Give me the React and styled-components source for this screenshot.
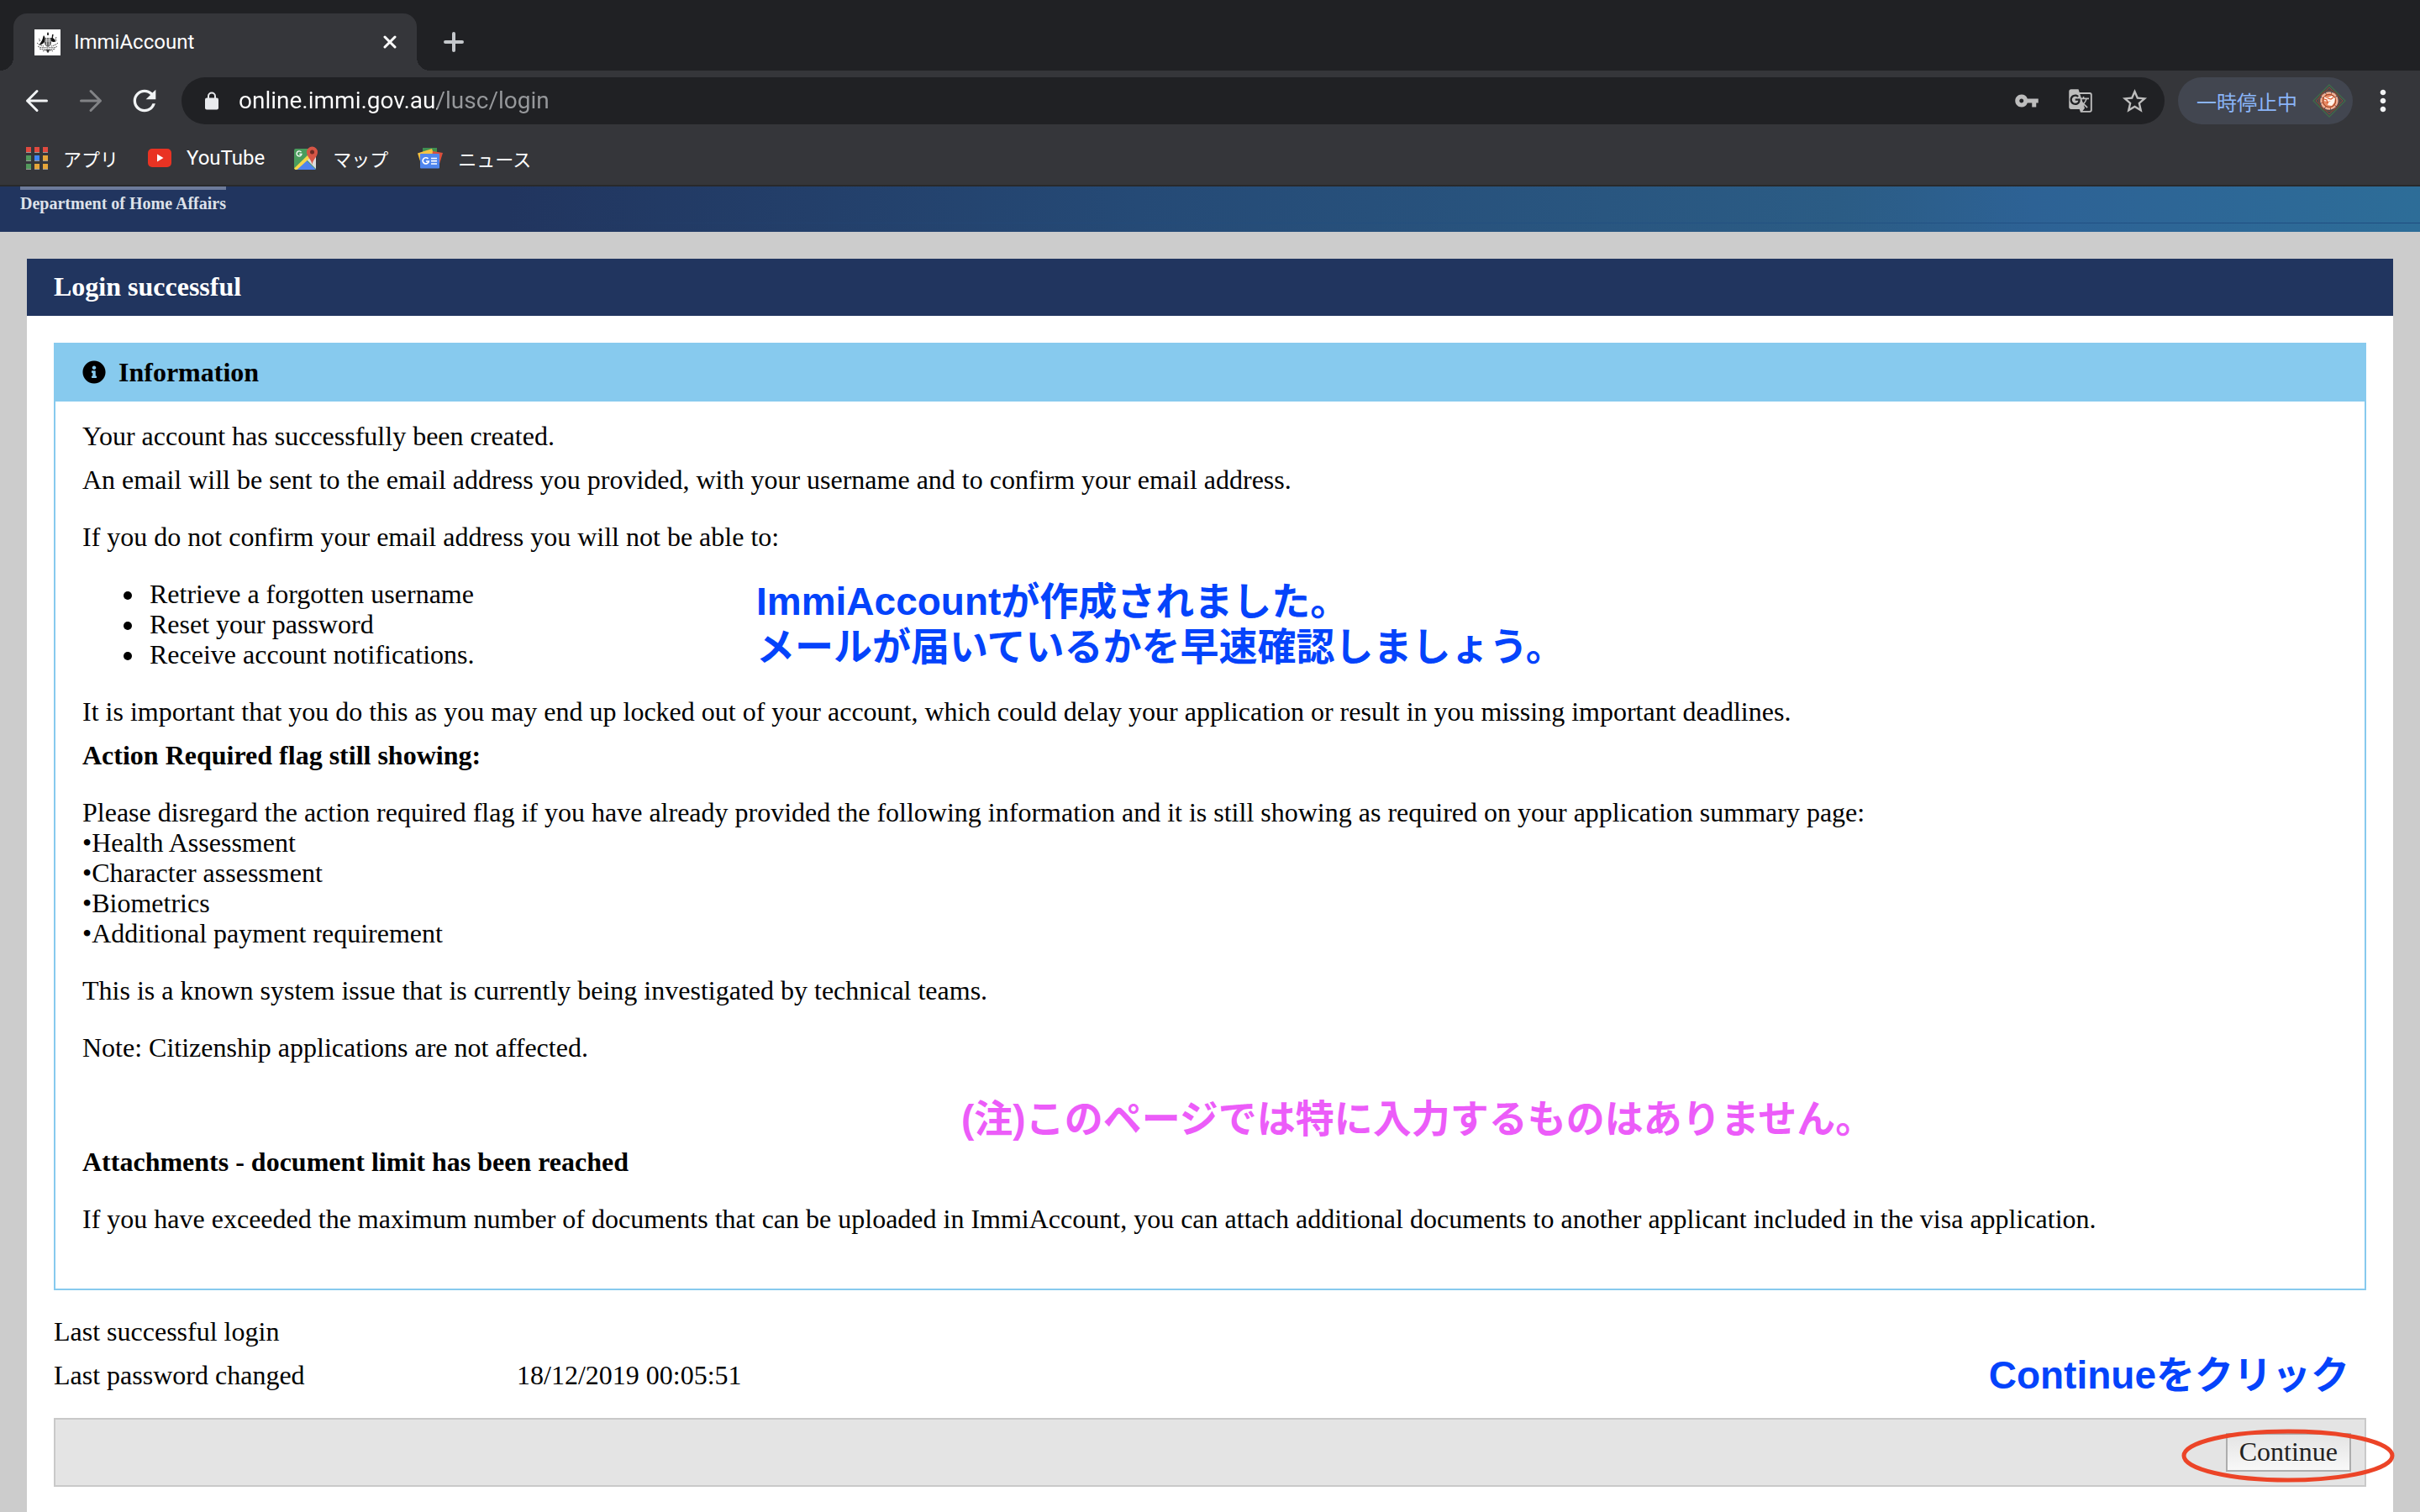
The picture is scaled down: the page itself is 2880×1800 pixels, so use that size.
import React from 'react'
import styled, { createGlobalStyle } from 'styled-components'
import { MdGTranslate, MdMoreVert, MdRefresh, MdStarBorder, MdVpnKey } from 'react-icons/md'
import { FaInfoCircle } from 'react-icons/fa'

const BaseStyles = createGlobalStyle`
  *,
  *::before,
  *::after {
    box-sizing: border-box;
  }

  :root {
    --c-strip: #202124;
    --c-toolbar: #35363a;
    --c-navy: #21355f;
    --c-info: #87caee;
    --c-note: #0443fb;
    --f-ui: Roboto, 'Noto Sans CJK JP', sans-serif;
    --f-page: 'Liberation Serif', serif;
    --f-note: 'Liberation Sans', 'Noto Sans CJK JP', sans-serif;
  }

  body {
    margin: 0;
    background: #ccc;
  }

  button {
    padding: 0;
    border: 0;
    background: none;
    color: inherit;
    font: inherit;
    cursor: pointer;
  }

  svg {
    display: block;
    flex: none;
  }
`

const Window = styled.div`
  display: flex;
  flex-direction: column;
  min-height: 100vh;
`

const TabStrip = styled.div`
  display: flex;
  height: 84px;
  padding: 16px 16px 0;
  gap: 24px;
  background: var(--c-strip);
`

const Tab = styled.div`
  position: relative;
  display: flex;
  align-items: center;
  width: 480px;
  padding: 0 22px 0 25px;
  gap: 16px;
  border-radius: 16px 16px 0 0;
  background: var(--c-toolbar);
  color: #fff;
  font-family: var(--f-ui);
  font-size: 24px;

  &::before,
  &::after {
    content: '';
    position: absolute;
    bottom: 0;
    width: 16px;
    height: 16px;
  }

  &::before {
    right: 100%;
    background: radial-gradient(circle at 0 0, transparent 16px, var(--c-toolbar) 16px);
  }

  &::after {
    left: 100%;
    background: radial-gradient(circle at 100% 0, transparent 16px, var(--c-toolbar) 16px);
  }
`

const TabTitle = styled.span`
  flex: 1;
`

const IconButton = styled.button`
  display: flex;
  align-items: center;
  justify-content: center;
  width: ${props => props.$size || 40}px;
  color: ${props => props.$color || '#f1f3f4'};
`

const Toolbar = styled.div`
  display: flex;
  align-items: center;
  height: 72px;
  padding: 0 32px 0 24px;
  gap: 24px;
  background: var(--c-toolbar);
`

const Omnibox = styled.div`
  display: flex;
  flex: 1;
  align-items: center;
  height: 56px;
  margin-right: -8px;
  padding: 0 16px 0 28px;
  gap: 24px;
  border-radius: 28px;
  background: var(--c-strip);
`

// the path after the host is dimmed
const Address = styled.input`
  flex: 1;
  min-width: 0;
  padding: 0;
  border: 0;
  outline: 0;
  background: linear-gradient(90deg, #fff 236px, #97999c 236px);
  background-clip: text;
  color: transparent;
  font-family: var(--f-ui);
  font-size: 28px;
  line-height: 40px;
`

const ProfileButton = styled.button`
  display: flex;
  align-items: center;
  height: 56px;
  padding: 0 8px 0 22px;
  gap: 18px;
  border-radius: 28px;
  background: #424650;
  color: #8ab4f8;
  font-family: var(--f-ui);
  font-size: 24px;
`

const Bookmarks = styled.nav`
  display: flex;
  align-items: center;
  height: 74px;
  padding: 0 31px;
  gap: 35px;
  border-bottom: 2px solid #28292b;
  background: var(--c-toolbar);
  height: 66px;
`

const Bookmark = styled.a`
  display: flex;
  align-items: center;
  gap: 18px;
  color: #fff;
  font-family: var(--f-ui);
  font-size: ${props => (props.$latin ? 24 : 22)}px;
  text-decoration: none;
`

const SiteHeader = styled.header`
  height: 54px;
  padding: 0 24px;
  background:
    linear-gradient(90deg, transparent 20%, #1f4c80) 0 43px / 100% 1px no-repeat,
    linear-gradient(90deg, var(--c-navy) 21%, #254a76 47%, #2b5c85 76%, #2d6295 84%, #2d6d98);
`

const Department = styled.div`
  width: max-content;
  padding-top: 6px;
  border-top: 4px solid #6d7b9b;
  color: #dde1e9;
  font-family: var(--f-page);
  font-size: 20px;
  font-weight: bold;
  line-height: 20px;
`

const Page = styled.main`
  display: flex;
  flex: 1;
  flex-direction: column;
  padding: 32px 32px 0;
  background: #ccc;
  color: #000;
  font-family: var(--f-page);
  font-size: 32px;
  line-height: 36px;
`

const PageTitle = styled.h1`
  margin: 0;
  padding: 15px 32px 17px;
  background: var(--c-navy);
  color: #fff;
  font-size: 32px;
  line-height: 36px;
`

const Panel = styled.div`
  flex: 1;
  padding: 32px 32px 30px;
  background: #fff;
`

const InfoBox = styled.section`
  position: relative;
  border: 2px solid var(--c-info);
`

const InfoTitle = styled.h2`
  display: flex;
  align-items: center;
  margin: 0;
  padding: 15px 32px 17px;
  gap: 15px;
  background: var(--c-info);
  font-size: 32px;
  line-height: 36px;
`

const InfoBody = styled.div`
  padding: 23px 32px 65px;
`

const Paragraph = styled.p`
  margin: 0 0 ${props => (props.$tight ? 16 : 32)}px;
  font-weight: ${props => (props.$strong ? 'bold' : 'normal')};

  &:last-child {
    margin-bottom: 0;
  }
`

const BulletList = styled.ul`
  margin: 0 0 32px;
  padding-left: 75px;

  li {
    padding-left: 5px;
  }
`

const Details = styled.dl`
  display: grid;
  grid-template-columns: 551px 1fr;
  margin: 31px 0 33px;
  row-gap: 16px;
`

const DetailValue = styled.dd`
  margin: 0;
`

const Actions = styled.div`
  position: relative;
  display: flex;
  justify-content: flex-end;
  padding: 16px;
  border: 2px solid #c9c9c9;
  background: #e4e4e4;
`

const ContinueButton = styled.button`
  height: 46px;
  padding: 0 14px 2px;
  border: 2px solid #adadad;
  background: linear-gradient(#e4e4e4, #f8f8f8);
  color: #222;
`

// notes that float over the page
const Note = styled.p`
  position: absolute;
  top: ${props => props.$top}px;
  left: ${props => props.$left};
  right: ${props => props.$right};
  margin: 0;
  color: ${props => props.$color || 'var(--c-note)'};
  font-family: var(--f-note);
  font-size: 46px;
  font-weight: bold;
  line-height: 54px;
  white-space: nowrap;
`

const Ring = styled.svg`
  position: absolute;
  top: 10px;
  right: -36px;
  pointer-events: none;
`

const CrestIcon = () => (
  <svg width="31" height="31" viewBox="0 0 31 31">
    <path fill="#fff" d="M0 0h31v31H0z" />
    <path fill="#111" d="M16 3l1 2-.3 2h-1.4L15 5zM6 18c1-2 2-3 3-5s1-4 2-6l1 1.500c1 2 1 4 .5 6L10 17l-3 1.500zM19 10.500c2-1 4 0 5 1.500l1.500 2.500-3 .5-3-1zM21 6.500l1-1 .6 1-.8 4-1.300.5z" />
    <path fill="#666" d="M12 10h8v6c0 3-2 4-4 5-2-1-4-2-4-5z" />
    <path fill="none" stroke="#ddd" strokeWidth=".8" d="M12 14h8M14.500 10v9M17.500 10v9M13 12h6" />
    <path fill="none" stroke="#555" strokeWidth="1" strokeDasharray="2 .7" d="M3 16c2 2 4 3 8 4M28 16c-2 2-4 3-8 4M4 20c4 3 7 1 12 2 5-1 8 1 11-2M6 23c3 1 6 1 9 1s7 0 10-1M10 26c3-2 9-2 12 0M26 9l-1 3 2 2M5 11l2 2-2 1" />
    <path fill="#333" d="M14 24h4l-1 3.500h-2z" />
  </svg>
)

const CloseIcon = () => (
  <svg width="16" height="16" viewBox="0 0 16 16" fill="none" stroke="currentColor" strokeWidth="3" strokeLinecap="round">
    <path d="M2 2l12 12M14 2L2 14" />
  </svg>
)

const PlusIcon = () => (
  <svg width="24" height="24" viewBox="0 0 24 24" fill="none" stroke="currentColor" strokeWidth="4" strokeLinecap="round">
    <path d="M12 2v20M2 12h20" />
  </svg>
)

const ArrowIcon = ({ forward }) => (
  <svg width="28" height="28" viewBox="0 0 28 28" fill="none" stroke="currentColor" strokeWidth="3" strokeLinecap="round" strokeLinejoin="round">
    <path d={forward ? 'M2.500 14h23M14 2.500L25.500 14 14 25.500' : 'M25.500 14h-23M14 2.500L2.500 14 14 25.500'} />
  </svg>
)

const LockIcon = () => (
  <svg width="16" height="22" viewBox="0 0 16 22">
    <path fill="none" stroke="#e8eaed" strokeWidth="2" d="M4 9V5.500a4 4 0 0 1 8 0V9" />
    <rect y="7.500" width="16" height="14" rx="2" fill="#e8eaed" />
  </svg>
)

const appColors = ['#e04a3f', '#e04a3f', '#e04a3f', '#53995c', '#4285f4', '#e5a53a', '#53995c', '#e5a53a', '#e5a53a']

const AppsIcon = () => (
  <svg width="26" height="27" viewBox="0 0 26 27">
    {appColors.map((color, i) => (
      <g key={i}>
        <rect x={(i % 3) * 10} y={Math.floor(i / 3) * 10} width="6" height="7" fill="#9a9a9a" />
        <rect x={(i % 3) * 10} y={Math.floor(i / 3) * 10} width="6" height="6" fill={color} />
      </g>
    ))}
  </svg>
)

const YouTubeIcon = () => (
  <svg width="28" height="22" viewBox="0 0 28 22">
    <rect width="28" height="22" rx="5" fill="#e93323" />
    <path d="M11 6.500l7.500 4.500-7.500 4.500z" fill="#fff" />
  </svg>
)

const MapsIcon = () => (
  <svg width="28" height="28" viewBox="0 0 28 28">
    <rect y="3" width="26" height="25" rx="2" fill="#4a9c5d" />
    <path d="M13 15.500L26 28H1z" fill="#5083ee" />
    <path d="M26 9v18L14.500 15.500z" fill="#dcdcdc" />
    <path d="M0 26.500L19 8l2 4L3.500 28H1.500z" fill="#f7d64a" />
    <path d="M21.500 22c-.5-6-6.500-9-6.500-15a6.500 6.500 0 0 1 13 0c0 6-6 9-6.500 15z" fill="#d65545" />
    <circle cx="21.500" cy="7" r="2.500" fill="#6f2b24" />
    <path d="M8.500 7.200A3 3 0 1 0 9 9.500H6.300" fill="none" stroke="#fff" strokeWidth="1.300" />
  </svg>
)

const NewsIcon = () => (
  <svg width="30" height="25" viewBox="0 0 30 25">
    <rect x="6" width="17" height="14" fill="#3f8f50" />
    <path d="M0 6.500L17 1l4 12-17 6z" fill="#f5c243" />
    <path d="M18 4l12 2-4 13-10-3z" fill="#d9503f" />
    <rect x="3" y="7" width="23" height="17.500" rx="1" fill="#4f86ee" />
    <path d="M12.500 13A3.600 3.600 0 1 0 13.300 16H10M16 12.500h7M16 15.700h7M16 19h7" fill="none" stroke="#fff" strokeWidth="1.700" />
  </svg>
)

const AvatarIcon = () => (
  <svg width="40" height="40" viewBox="0 0 40 40">
    <path d="M20 1l19 19-19 19L1 20z" fill="none" stroke="#3f6b48" strokeWidth="1.300" />
    <path d="M20 4l16 16-16 16L4 20z" fill="none" stroke="#8a4a36" strokeWidth="1" />
    <circle cx="20" cy="20" r="12.500" fill="none" stroke="#7a4632" strokeWidth="1" />
    <circle cx="20" cy="20" r="9.500" fill="#c4562f" stroke="#f0b095" strokeWidth="2.500" strokeDasharray="6 .8" />
    <circle cx="20" cy="20" r="7.500" fill="#e88a64" stroke="#8e3b1f" strokeWidth=".8" />
    <path d="M14 15l3 2 6-3 4 3-1 5-3 4-5-1 1-3 3-2-5 1-3-1z" fill="#fff3ea" />
    <path d="M14 18l3 1 1 4M18 17l4 1 3-2" fill="none" stroke="#d9552a" strokeWidth="1.200" />
  </svg>
)

const App = () => (
  <>
    <BaseStyles />
    <Window>
      <TabStrip>
        <Tab>
          <CrestIcon />
          <TabTitle>ImmiAccount</TabTitle>
          <IconButton $size={20} $color="#fff" aria-label="Close tab"><CloseIcon /></IconButton>
        </Tab>
        <IconButton $color="#c4c7cb" aria-label="New tab"><PlusIcon /></IconButton>
      </TabStrip>

      <Toolbar>
        <IconButton aria-label="Back"><ArrowIcon /></IconButton>
        <IconButton $color="#828386" aria-label="Forward"><ArrowIcon forward /></IconButton>
        <IconButton aria-label="Reload"><MdRefresh size={40} /></IconButton>
        <Omnibox>
          <LockIcon />
          <Address aria-label="Address" defaultValue="online.immi.gov.au/lusc/login" />
          <IconButton $color="#bdbdbd" aria-label="Passwords"><MdVpnKey size={30} /></IconButton>
          <IconButton $color="#bdbdbd" aria-label="Translate"><MdGTranslate size={30} /></IconButton>
          <IconButton $color="#bdbdbd" aria-label="Bookmark"><MdStarBorder size={35} /></IconButton>
        </Omnibox>
        <ProfileButton>
          一時停止中
          <AvatarIcon />
        </ProfileButton>
        <IconButton $size={24} aria-label="Menu"><MdMoreVert size={40} /></IconButton>
      </Toolbar>

      <Bookmarks>
        <Bookmark href="#apps"><AppsIcon />アプリ</Bookmark>
        <Bookmark href="#youtube" $latin><YouTubeIcon />YouTube</Bookmark>
        <Bookmark href="#maps"><MapsIcon />マップ</Bookmark>
        <Bookmark href="#news"><NewsIcon />ニュース</Bookmark>
      </Bookmarks>

      <SiteHeader>
        <Department>Department of Home Affairs</Department>
      </SiteHeader>

      <Page>
        <PageTitle>Login successful</PageTitle>
        <Panel>
          <InfoBox>
            <InfoTitle><FaInfoCircle size={28} />Information</InfoTitle>
            <InfoBody>
              <Paragraph $tight>Your account has successfully been created.</Paragraph>
              <Paragraph>An email will be sent to the email address you provided, with your username and to confirm your email address.</Paragraph>
              <Paragraph>If you do not confirm your email address you will not be able to:</Paragraph>
              <BulletList>
                <li>Retrieve a forgotten username</li>
                <li>Reset your password</li>
                <li>Receive account notifications.</li>
              </BulletList>
              <Paragraph $tight>It is important that you do this as you may end up locked out of your account, which could delay your application or result in you missing important deadlines.</Paragraph>
              <Paragraph $strong>Action Required flag still showing:</Paragraph>
              <Paragraph>
                Please disregard the action required flag if you have already provided the following information and it is still showing as required on your application summary page:<br />
                •Health Assessment<br />
                •Character assessment<br />
                •Biometrics<br />
                •Additional payment requirement
              </Paragraph>
              <Paragraph>This is a known system issue that is currently being investigated by technical teams.</Paragraph>
              <Paragraph>Note: Citizenship applications are not affected.</Paragraph>
              <Paragraph><br /></Paragraph>
              <Paragraph $strong>Attachments - document limit has been reached</Paragraph>
              <Paragraph>If you have exceeded the maximum number of documents that can be uploaded in ImmiAccount, you can attach additional documents to another applicant included in the visa application.</Paragraph>
            </InfoBody>
            <Note $top={279} $left="834px">
              ImmiAccountが作成されました。<br />
              メールが届いているかを早速確認しましょう。
            </Note>
            <Note $top={895} $left="1078px" $color="#ec5cf9">(注)このページでは特に入力するものはありません。</Note>
          </InfoBox>

          <Details>
            <dt>Last successful login</dt>
            <DetailValue />
            <dt>Last password changed</dt>
            <DetailValue>18/12/2019 00:05:51</DetailValue>
          </Details>

          <Actions>
            <ContinueButton>Continue</ContinueButton>
            <Note $top={-80} $right="18px">Continueをクリック</Note>
            <Ring width="254" height="66" viewBox="0 0 254 66">
              <ellipse cx="127" cy="33" rx="124" ry="29" fill="none" stroke="#ec4427" strokeWidth="5" />
            </Ring>
          </Actions>
        </Panel>
      </Page>
    </Window>
  </>
)

export default App
